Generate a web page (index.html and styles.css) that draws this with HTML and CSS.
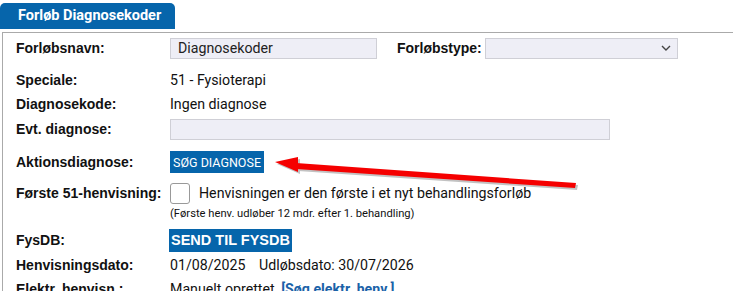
FILE: index.html
```html
<!DOCTYPE html>
<html lang="da">
<head>
  <meta charset="UTF-8">
  <title>Forløb Diagnosekoder</title>
  <link rel="stylesheet" href="styles.css">
</head>
<body>
  <div class="tab">Forløb Diagnosekoder</div>
  <div class="panel">
    <div class="row row-first">
      <span class="label">Forløbsnavn:</span>
      <div class="field name-field">Diagnosekoder</div>
      <span class="label type-label">Forløbstype:</span>
      <div class="field select-field">
        <svg width="10" height="6" viewBox="0 0 10 6"><path d="M1 1l4 4 4-4" fill="none" stroke="#444" stroke-width="1.4"/></svg>
      </div>
    </div>
    <div class="row row-speciale">
      <span class="label">Speciale:</span>
      <span class="value">51 - Fysioterapi</span>
    </div>
    <div class="row">
      <span class="label">Diagnosekode:</span>
      <span class="value">Ingen diagnose</span>
    </div>
    <div class="row row-evt">
      <span class="label">Evt. diagnose:</span>
      <div class="field evt-field"></div>
    </div>
    <div class="row row-aktion">
      <span class="label">Aktionsdiagnose:</span>
      <button class="btn btn-small">SØG DIAGNOSE</button>
    </div>
    <div class="row row-first51">
      <span class="label">Første 51-henvisning:</span>
      <span class="checkbox"></span>
      <span class="value check-text">Henvisningen er den første i et nyt behandlingsforløb</span>
    </div>
    <div class="note">(Første henv. udløber 12 mdr. efter 1. behandling)</div>
    <div class="row row-fysdb">
      <span class="label">FysDB:</span>
      <button class="btn btn-big">SEND TIL FYSDB</button>
    </div>
    <div class="row">
      <span class="label">Henvisningsdato:</span>
      <span class="value">01/08/2025 <span class="gap">Udløbsdato: 30/07/2026</span></span>
    </div>
    <div class="row">
      <span class="label">Elektr. henvisn.:</span>
      <span class="value">Manuelt oprettet <a class="link" href="#">[Søg elektr. henv.]</a></span>
    </div>
  </div>

  <!-- annotation arrow -->
  <svg class="arrow" width="320" height="50" viewBox="270 150 320 50">
    <g transform="translate(2,2)" fill="#9a9a9a" opacity="0.6">
      <polygon points="275,162 298,157 298,172"/>
      <polygon points="296,163 576,183 575,188 296,169"/>
    </g>
    <g fill="#f50000">
      <polygon points="275,162 298,157 298,172"/>
      <polygon points="296,163 576,183 575,188 296,169"/>
    </g>
  </svg>
</body>
</html>
```

FILE: styles.css
```css
body {
  margin: 0;
  font-family: Roboto, "Liberation Sans", sans-serif;
  font-size: 14px;
  color: #111;
  background: #fff;
  position: relative;
  width: 733px;
  height: 291px;
  overflow: hidden;
}

.tab {
  margin-top: 3px;
  width: 175px;
  height: 26px;
  box-sizing: border-box;
  padding-left: 18px;
  line-height: 26px;
  background: #0665ab;
  color: #fff;
  font-weight: bold;
  font-size: 14.5px;
  border-radius: 5px 5px 0 0;
}

.panel {
  margin-top: 3px;
  margin-left: 2px;
  border-top: 1px solid #aaa;
  border-left: 1px solid #aaa;
  padding: 2px 0 0 13px;
}

.row {
  display: flex;
  align-items: center;
  height: 24px;
}

.label {
  width: 154px;
  flex-shrink: 0;
  font-family: "Liberation Sans", Arial, sans-serif;
  font-weight: bold;
  font-size: 14px;
  color: #111;
}

.value {
  font-size: 14.2px;
}

.row-first {
  height: 26px;
}

.field {
  box-sizing: border-box;
  height: 21px;
  background: #eeeef6;
  border: 1px solid #cfcfd6;
  display: flex;
  align-items: center;
  padding-left: 7px;
  font-size: 14.2px;
  color: #222;
}

.name-field {
  width: 207px;
}

.type-label {
  width: auto;
  margin-left: 20px;
  margin-right: 3px;
}

.select-field {
  width: 193px;
  justify-content: flex-end;
  padding-right: 6px;
}

.row-speciale {
  margin-top: 7px;
}

.row-evt {
  height: 26px;
}

.evt-field {
  width: 440px;
}

.row-aktion {
  margin-top: 8px;
}

.btn {
  border: none;
  background: #0665ab;
  color: #fff;
  font-family: Roboto, "Liberation Sans", sans-serif;
  padding: 0;
  cursor: pointer;
}

.btn-small {
  width: 94px;
  height: 22px;
  font-size: 12.5px;
}

.row-first51 {
  margin-top: 7px;
}

.checkbox {
  box-sizing: border-box;
  width: 20px;
  height: 21px;
  border: 1px solid #999;
  border-radius: 3px;
  background: #fff;
}

.check-text {
  margin-left: 9px;
}

.note {
  margin-top: 2px;
  margin-left: 154px;
  height: 14px;
  font-size: 11.2px;
  line-height: 14px;
}

.row-fysdb {
  margin-top: 6px;
  height: 26px;
}

.btn-big {
  margin-left: -1px;
  width: 123px;
  height: 23px;
  font-size: 14.5px;
  font-weight: bold;
  font-family: "Liberation Sans", Arial, sans-serif;
}

.gap {
  margin-left: 10px;
}

.link {
  color: #1a62a8;
  font-weight: bold;
  text-decoration: none;
  margin-left: 3px;
}

.arrow {
  position: absolute;
  left: 270px;
  top: 150px;
}
```
